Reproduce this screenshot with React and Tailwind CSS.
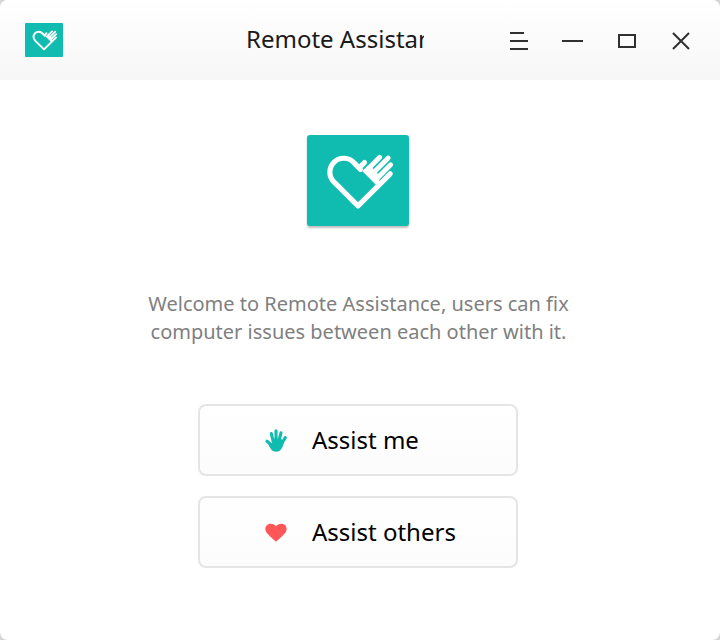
function HeartHand({ className }) {
  return (
    <svg viewBox="0 0 102 91" className={className} fill="none" stroke="#fff" strokeWidth="5.2" strokeLinecap="round" strokeLinejoin="round">
      <path d="M53.5 34.5 L47.3 28.1 A13.9 13.9 0 1 0 27.7 47.7 L51 70.8 L83.2 38.8" />
      <path d="M53 32 L57.5 27.5" />
      <path d="M61 34 L72.7 22.3 M66 38.2 L81.2 23 M70 43.4 L83.6 29.8" strokeWidth="4.9" />
      <path d="M55.2 36.1 L61 30.6 L66 33.4 L70 37.6 L72.8 42.6 L72 47.4 L69.4 50.2 Z" fill="#fff" stroke="none" />
    </svg>
  );
}

function Hand() {
  return (
    <svg viewBox="0 0 24 24" className="h-6 w-6" fill="none" stroke="#10bbb0" strokeWidth="3.1" strokeLinecap="round" strokeLinejoin="round">
      <path d="M9.2 13.5 L7.3 5.6 M12.1 12 L12 2.7 M14.9 13 L17 4.8 M17.5 16 L21.3 9.6 M7.2 17 L2.9 13.2" />
      <path d="M8 10.5 H17 L20 14.6 C18.9 18 18.2 21 15.8 22.7 C13.2 24.1 9.8 23.9 7.8 22.2 L4.6 17.5 L6.8 14.8 L8.7 15 Z" fill="#10bbb0" stroke="none" />
    </svg>
  );
}

function Heart() {
  return (
    <svg viewBox="0 0 24 24" className="h-6 w-6">
      <path d="M12 21.8 C11 20.8 4.5 15 2.6 12.7 C-.2 9 1.9 3.8 6.6 3.8 C9 3.8 11 4.7 12 6.2 C13 4.7 15 3.8 17.4 3.8 C22.1 3.8 24.2 9 21.4 12.7 C19.5 15 13 20.8 12 21.8 Z" fill="#ff5757" />
    </svg>
  );
}

function Choice({ icon, children }) {
  return (
    <button className="flex h-[72px] w-80 items-center rounded-lg border-2 border-[#e5e5e5] bg-linear-to-b from-white to-[#fcfcfc] pl-16 text-left text-[24px] text-black">
      {icon}
      <span className="ml-6 whitespace-nowrap">{children}</span>
    </button>
  );
}

export default function App() {
  return (
    <div className="h-[640px] w-[720px] bg-[#d6d6d6] font-['Noto_Sans',sans-serif]">
      <div className="flex h-full flex-col overflow-hidden rounded-lg bg-white">
        <header className="flex h-20 shrink-0 items-center bg-linear-to-b from-white to-[#f7f7f7] pl-[25px]">
          <div className="h-[34px] w-[38px] rounded-[1px] bg-[#10bbb0]">
            <HeartHand className="h-full w-full" />
          </div>
          <h1 className="mb-0.5 ml-[183px] w-[178px] overflow-hidden text-[24px] leading-8 whitespace-nowrap text-[#1a1a1a]">Remote Assistance</h1>
          <svg viewBox="0 0 216 80" className="ml-[68px] h-20 w-[216px]" fill="none" stroke="#303030" strokeWidth="2">
            <path d="M18 33 H32 M18 41 H36 M18 49 H36 M70 41 H91" />
            <path d="M127 35 H143 V47 H127 Z M181 33 L197 49 M197 33 L181 49" />
          </svg>
        </header>
        <main className="flex flex-col items-center pt-[55px] pr-1">
          <div className="h-[91px] w-[102px] rounded-[3px] bg-[#10bbb0] shadow-[0_2px_2px_rgba(0,0,0,0.25)]">
            <HeartHand className="h-full w-full" />
          </div>
          <p className="mt-16 pl-px text-center text-[20px] leading-7 whitespace-nowrap text-[#808080]">
            Welcome to Remote Assistance, users can fix<br />computer issues between each other with it.
          </p>
          <div className="mt-[58px] flex flex-col gap-5">
            <Choice icon={<Hand />}>Assist me</Choice>
            <Choice icon={<Heart />}>Assist others</Choice>
          </div>
        </main>
      </div>
    </div>
  );
}
